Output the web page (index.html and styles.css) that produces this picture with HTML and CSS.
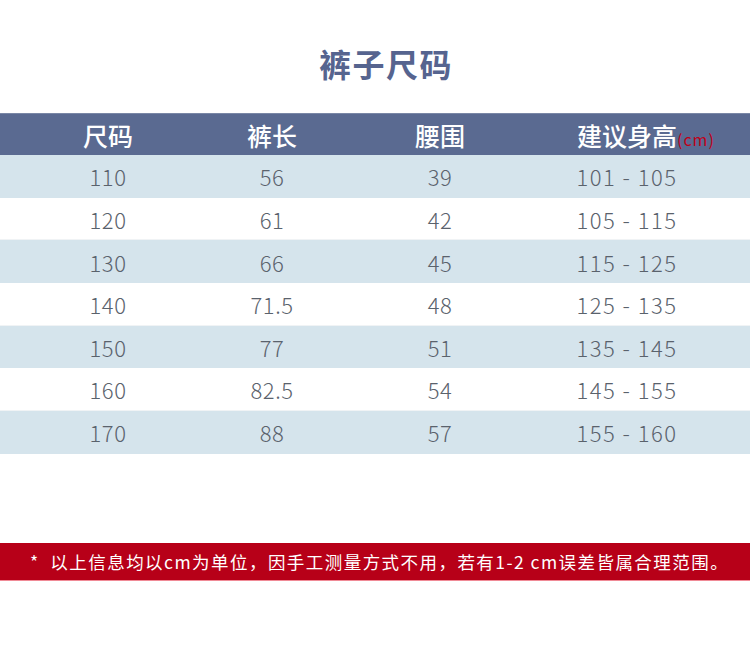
FILE: index.html
```html
<!DOCTYPE html>
<html lang="zh">
<head>
<meta charset="utf-8">
<link rel="stylesheet" href="styles.css">
</head>
<body>
<div class="page">
  <h1 class="title">裤子尺码</h1>
  <div class="table">
    <div class="row head">
      <div>尺码</div><div>裤长</div><div>腰围</div><div class="h4">建议身高<span class="unit">(cm)</span></div>
    </div>
    <div class="row alt"><div>110</div><div>56</div><div>39</div><div class="range">101 - 105</div></div>
    <div class="row"><div>120</div><div>61</div><div>42</div><div class="range">105 - 115</div></div>
    <div class="row alt"><div>130</div><div>66</div><div>45</div><div class="range">115 - 125</div></div>
    <div class="row"><div>140</div><div>71.5</div><div>48</div><div class="range">125 - 135</div></div>
    <div class="row alt"><div>150</div><div>77</div><div>51</div><div class="range">135 - 145</div></div>
    <div class="row"><div>160</div><div>82.5</div><div>54</div><div class="range">145 - 155</div></div>
    <div class="row alt"><div>170</div><div>88</div><div>57</div><div class="range">155 - 160</div></div>
  </div>
  <div class="note">* &nbsp;以上信息均以cm为单位，因手工测量方式不用，若有1-2 cm误差皆属合理范围。</div>
</div>
</body>
</html>
```
FILE: styles.css
```css
html, body {
  margin: 0;
  padding: 0;
  background: #ffffff;
}
.page {
  width: 750px;
  height: 651px;
  font-family: "Noto Sans CJK SC", "Noto Sans", sans-serif;
  padding-top: 41px;
  box-sizing: border-box;
}
.title {
  margin: 0;
  height: 72px;
  text-align: center;
  font-size: 32px;
  line-height: 44px;
  font-weight: 700;
  color: #56648f;
  padding-left: 22px;
  letter-spacing: 1.5px;
}
.table {
  display: flex;
  flex-direction: column;
}
.row {
  display: grid;
  grid-template-columns: 176px 152px 184px 190px;
  padding-left: 20px;
  height: 42.7px;
  align-items: center;
  text-align: center;
  font-size: 22px;
  font-weight: 300;
  color: #5a626c;
  letter-spacing: 0.5px;
  border-bottom: 1px solid #f0f3f5;
  box-sizing: border-box;
}
.row.alt {
  background: #d5e4ec;
  border-bottom: none;
}
.range {
  letter-spacing: 1.5px;
}
.row.head {
  height: 42px;
  background: #5a6a91;
  color: #ffffff;
  font-size: 25px;
  font-weight: 500;
  letter-spacing: 0;
  border-bottom: none;
  border-top: 1px solid #7a87a6;
}
.head .h4 {
  padding-left: 45px;
  text-align: left;
  white-space: nowrap;
}
.unit {
  color: #c00018;
  font-size: 16px;
  font-weight: 400;
  letter-spacing: 1px;
}
.note {
  margin-top: 89px;
  height: 38px;
  background: #b70018;
  border-bottom: 1px solid #f08a96;
  box-sizing: border-box;
  color: #ffffff;
  font-size: 17.5px;
  line-height: 37px;
  padding-left: 30px;
  white-space: nowrap;
  letter-spacing: 1.45px;
}
```
